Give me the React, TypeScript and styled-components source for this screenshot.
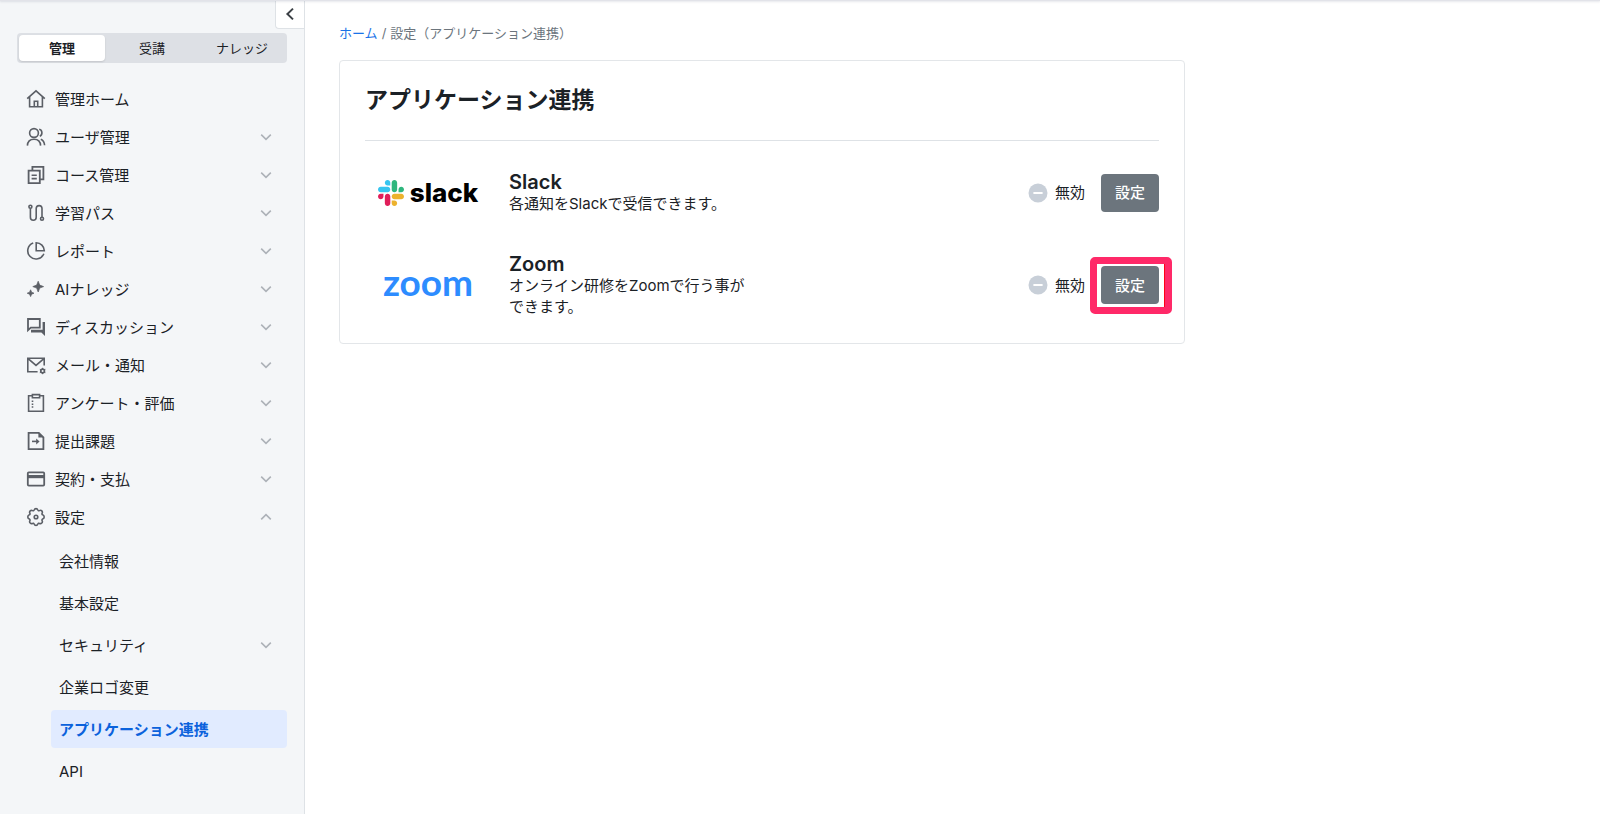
import React from "react";
import styled, { createGlobalStyle, css } from "styled-components";

const GlobalStyle = createGlobalStyle`
  *, *::before, *::after { box-sizing: border-box; }
  body {
    margin: 0;
    background: #ffffff;
    color: #1b2126;
    font-family: Inter, "Noto Sans CJK JP", sans-serif;
    font-size: 15px;
    line-height: 21px;
  }
  button { font: inherit; color: inherit; cursor: pointer; }
  ul { list-style: none; margin: 0; padding: 0; }
`;

/* ---------- page frame ---------- */

const TopEdge = styled.div`
  position: relative;
  z-index: 1;
  height: 1px;
  margin-bottom: -1px;
  background: #e2e3e9;
  box-shadow: 0 1px 2px rgba(40, 45, 80, 0.16);
`;

const Page = styled.div`
  display: flex;
  min-height: 100vh;
`;

const Sidebar = styled.aside`
  display: flex;
  flex-direction: column;
  flex: 0 0 305px;
  background: #f4f6f8;
  border-right: 1px solid #dee2e6;
`;

const CollapseButton = styled.button`
  display: flex;
  align-items: center;
  justify-content: center;
  align-self: flex-end;
  width: 29px;
  height: 29px;
  padding: 0;
  background: #ffffff;
  border: 1px solid #dee2e6;
  border-width: 0 0 1px 1px;
  border-radius: 0 0 0 4px;
`;

const ModeTabs = styled.div`
  display: flex;
  gap: 4px;
  margin: 4px 17px 0;
  padding: 2px;
  height: 30px;
  border-radius: 4px;
  background: #dde0e5;
`;

const ModeTab = styled.button<{ $active?: boolean }>`
  flex: 1 1 0;
  padding: 0;
  border: 0;
  border-radius: 4px;
  background: transparent;
  font-size: 13px;
  line-height: 26px;
  ${(p) =>
    p.$active &&
    css`
      background: #ffffff;
      font-weight: 700;
      box-shadow: 0 1px 2px rgba(0, 0, 0, 0.12);
    `}
`;

/* ---------- navigation ---------- */

const Menu = styled.ul`
  padding: 17px 17px 0;
`;

const SubMenu = styled.ul`
  display: flex;
  flex-direction: column;
  gap: 4px;
  margin-top: 6px;
  padding-left: 34px;
`;

const MenuButton = styled.button<{ $sub?: boolean; $active?: boolean }>`
  display: flex;
  align-items: center;
  gap: 9px;
  width: 100%;
  height: 38px;
  padding: 0 15px 0 ${(p) => (p.$sub ? 8 : 9)}px;
  border: 0;
  border-radius: 4px;
  text-align: left;
  background: ${(p) => (p.$active ? "#e1ebff" : "transparent")};
  ${(p) =>
    p.$active &&
    css`
      color: #0b62dc;
      font-weight: 700;
    `}
`;

const MenuLabel = styled.span`
  flex: 1;
  white-space: nowrap;
`;

const MenuIcon = styled.svg`
  flex: none;
  width: 20px;
  height: 20px;
  fill: none;
  stroke: #5b5f66;
  stroke-width: 1.6;
`;

const ArrowIcon = styled.svg<{ $up?: boolean }>`
  flex: none;
  width: 12px;
  height: 12px;
  fill: none;
  stroke: #adb2b8;
  stroke-width: 1.6;
  ${(p) => p.$up && "transform: rotate(180deg);"}
`;

/* ---------- content ---------- */

const Main = styled.main`
  flex: 1;
  min-width: 0;
  padding: 23px 34px;
`;

const Breadcrumb = styled.nav`
  display: flex;
  gap: 4px;
  font-size: 13px;
  line-height: 21px;
  color: #6c757d;
`;

const CrumbLink = styled.a`
  color: #1a73e8;
  text-decoration: none;
`;

const Card = styled.section`
  max-width: 846px;
  margin-top: 16px;
  padding: 0 25px 26px;
  border: 1px solid #e3e6e9;
  border-radius: 4px;
`;

const CardTitle = styled.h1`
  margin: 0 0 30px;
  padding: 23px 0 24px;
  border-bottom: 1px solid #dee2e6;
  font-size: 23px;
  line-height: 32px;
  font-weight: 700;
`;

const AppList = styled.ul`
  display: flex;
  flex-direction: column;
  gap: 39px;
`;

const AppRow = styled.li`
  display: flex;
  align-items: center;
`;

const LogoCell = styled.div`
  display: flex;
  align-items: center;
  justify-content: center;
  flex: 0 0 126px;
  height: 40px;
  margin-right: 18px;
`;

const SlackWord = styled.span`
  margin-left: 6px;
  font-size: 26px;
  line-height: 26px;
  font-weight: 800;
  color: #000000;
`;

const ZoomWord = styled.span`
  padding-bottom: 6px;
  font-family: Lato, sans-serif;
  font-size: 37px;
  line-height: 40px;
  font-weight: 700;
  color: #2d8cff;
`;

const AppInfo = styled.div`
  flex: 0 1 242px;
  margin-right: auto;
`;

const AppName = styled.h2`
  margin: 0;
  font-size: 20px;
  line-height: 22px;
  font-weight: 600;
`;

const AppText = styled.p`
  margin: 0;
`;

const Status = styled.span`
  display: flex;
  align-items: center;
  gap: 7px;
  margin-right: 16px;
  white-space: nowrap;
`;

const ButtonHolder = styled.div<{ $marked?: boolean }>`
  position: relative;
  flex: none;
  ${(p) =>
    p.$marked &&
    css`
      &::after {
        content: "";
        position: absolute;
        inset: -9px -13px -10px -11px;
        border: 7px solid #ff2968;
        border-radius: 5px;
        box-shadow: inset -1px 0 #ff0018;
        pointer-events: none;
      }
    `}
`;

const SettingButton = styled.button`
  display: block;
  width: 58px;
  height: 38px;
  padding: 0;
  border: 0;
  border-radius: 4px;
  background: #6c757d;
  color: #ffffff;
  font-weight: 500;
`;

/* ---------- icons ---------- */

const icons: Record<string, React.ReactNode> = {
  home: <path d="M1.2 9.6 10 1.8l8.8 7.8M3.6 8v9.7h12.8V8M8.3 17.5v-5.3h3.4v5.3" />,
  users: (
    <>
      <circle cx="8" cy="6" r="4.4" />
      <path d="M1.4 18.6c.2-4 2.8-6.4 6.6-6.4s6.4 2.4 6.6 6.4M13.2 2.2c3.4.8 3.6 5.6.6 7M14.8 12.2c2.4 1 3.6 3 3.8 6" />
    </>
  ),
  course: (
    <>
      <path d="M6.4 5V1.8h11v12.6h-3.2M2.6 5.6h11.2v12.6H2.6z" strokeWidth="1.8" />
      <path d="M5.6 10.2h5.2M5.6 13.6h5.2" />
    </>
  ),
  path: (
    <>
      <circle cx="4.4" cy="3.8" r="1.5" />
      <circle cx="16" cy="15.8" r="1.5" />
      <path d="M4.4 5.4v8.8c0 4 5.8 4 5.8 0V5.6c0-4 5.8-4 5.8 0v8.6" />
    </>
  ),
  report: (
    <>
      <path d="M7.2 1.9a8.3 8.3 0 1 0 10.6 10.8" />
      <path d="M10.2 1.7v8.1h8.1a8.1 8.1 0 0 0-8.1-8.1z" />
    </>
  ),
  spark: (
    <path
      d="M12.2 2.2l1.5 3.9 3.9 1.5-3.9 1.5-1.5 3.9-1.5-3.9-3.9-1.5 3.9-1.5zM4.6 10.8l1 2.4 2.4 1-2.4 1-1 2.4-1-2.4-2.4-1 2.4-1z"
      fill="#5b5f66"
      strokeWidth="0.7"
    />
  ),
  forum: (
    <>
      <path d="M2 2h11.8v8.6H4.8L2 13.2z" strokeWidth="1.8" />
      <path d="M16.6 5H19v14l-3.6-3.4H5v-2.8h11.6z" fill="#5b5f66" stroke="none" />
    </>
  ),
  mail: (
    <>
      <path d="M11.6 16.8H1.8V3.2h16.4v7.4M2.4 3.8l7.6 6.6 7.6-6.6" />
      <circle cx="16.6" cy="16" r="1.9" />
      <path d="M16.6 12.8v6.4M13.8 14.4l5.6 3.2M13.8 17.6l5.6-3.2" strokeWidth="1" />
      <circle cx="16.6" cy="16" r="1" fill="#f4f6f8" stroke="none" />
    </>
  ),
  clipboard: (
    <>
      <path d="M6.2 2.8H2.6v15.4h14.8V2.8h-3.6M6.4 1.6h7.2v3.2H6.4z" />
      <path d="M6.5 7.6v1.5M6.5 10.4v1.5M6.5 13.2v1.5" />
    </>
  ),
  submit: (
    <>
      <path d="M2.6 1.9h10.2l4.6 4.4v11.8H2.6z" strokeWidth="1.8" />
      <path d="M12.4 1.6v4.8h5z" fill="#5b5f66" stroke="none" />
      <path d="M6 10.4h6" />
      <path d="M10.2 7.4l3.4 3-3.4 3z" fill="#5b5f66" stroke="none" />
    </>
  ),
  card: (
    <>
      <rect x="1.8" y="3.4" width="16.4" height="13.2" rx="1" strokeWidth="1.8" />
      <path d="M2 7.6h16" strokeWidth="3.2" />
    </>
  ),
  gear: (
    <>
      <path d="M10 1.6c1.2 0 1.5.4 1.9 1.4.3.7.9.9 1.5.6 1-.5 1.6-.6 2.4.3s.8 1.5.3 2.4c-.3.6-.1 1.2.6 1.5 1 .4 1.5.9 1.5 2.2s-.5 1.7-1.5 2.1c-.7.3-.9.9-.6 1.5.5 1 .5 1.6-.3 2.4s-1.5.8-2.4.4c-.6-.3-1.2-.1-1.5.6-.4 1-.7 1.4-1.9 1.4s-1.5-.4-1.9-1.4c-.3-.7-.9-.9-1.5-.6-1 .4-1.6.4-2.4-.4s-.8-1.4-.3-2.4c.3-.6.1-1.2-.6-1.5-1-.4-1.5-.8-1.5-2.1s.5-1.8 1.5-2.2c.7-.3.9-.9.6-1.5-.5-.9-.5-1.6.3-2.4s1.4-.8 2.4-.3c.6.3 1.2.1 1.5-.6.4-1 .7-1.4 1.9-1.4z" />
      <circle cx="10" cy="10" r="1.8" />
    </>
  ),
};

const Arrow = ({ up }: { up?: boolean }) => (
  <ArrowIcon $up={up} viewBox="0 0 12 12" aria-hidden="true">
    <path d="M1.2 3.6 6 8.4l4.8-4.8" />
  </ArrowIcon>
);

const SlackMark = () => (
  <svg width="26" height="26" viewBox="0 0 122.8 122.8" aria-hidden="true">
    <path fill="#E01E5A" d="M25.8 77.6c0 7.1-5.8 12.9-12.9 12.9S0 84.7 0 77.6s5.8-12.9 12.9-12.9h12.9v12.9zm6.5 0c0-7.1 5.8-12.9 12.9-12.9s12.9 5.8 12.9 12.9v32.3c0 7.1-5.8 12.9-12.9 12.9s-12.9-5.8-12.9-12.9V77.6z" />
    <path fill="#36C5F0" d="M45.2 25.8c-7.1 0-12.9-5.8-12.9-12.9S38.1 0 45.2 0s12.9 5.8 12.9 12.9v12.9H45.2zm0 6.5c7.1 0 12.9 5.8 12.9 12.9s-5.8 12.9-12.9 12.9H12.9C5.8 58.1 0 52.3 0 45.2s5.8-12.9 12.9-12.9h32.3z" />
    <path fill="#2EB67D" d="M97 45.2c0-7.1 5.8-12.9 12.9-12.9s12.9 5.8 12.9 12.9-5.8 12.9-12.9 12.9H97V45.2zm-6.5 0c0 7.1-5.8 12.9-12.9 12.9s-12.9-5.8-12.9-12.9V12.9C64.7 5.8 70.5 0 77.6 0s12.9 5.8 12.9 12.9v32.3z" />
    <path fill="#ECB22E" d="M77.6 97c7.1 0 12.9 5.8 12.9 12.9s-5.8 12.9-12.9 12.9-12.9-5.8-12.9-12.9V97h12.9zm0-6.5c-7.1 0-12.9-5.8-12.9-12.9s5.8-12.9 12.9-12.9h32.3c7.1 0 12.9 5.8 12.9 12.9s-5.8 12.9-12.9 12.9H77.6z" />
  </svg>
);

const DisabledIcon = () => (
  <svg width="20" height="20" viewBox="0 0 20 20" aria-hidden="true">
    <circle cx="10" cy="10" r="9.5" fill="#c8cfd8" />
    <path d="M5.4 10h9.2" stroke="#ffffff" strokeWidth="2" />
  </svg>
);

/* ---------- data ---------- */

const menuItems = [
  { icon: "home", label: "管理ホーム", leaf: true },
  { icon: "users", label: "ユーザ管理" },
  { icon: "course", label: "コース管理" },
  { icon: "path", label: "学習パス" },
  { icon: "report", label: "レポート" },
  { icon: "spark", label: "AIナレッジ" },
  { icon: "forum", label: "ディスカッション" },
  { icon: "mail", label: "メール・通知" },
  { icon: "clipboard", label: "アンケート・評価" },
  { icon: "submit", label: "提出課題" },
  { icon: "card", label: "契約・支払" },
  { icon: "gear", label: "設定", open: true },
];

const settingItems = [
  { label: "会社情報" },
  { label: "基本設定" },
  { label: "セキュリティ", group: true },
  { label: "企業ロゴ変更" },
  { label: "アプリケーション連携", active: true },
  { label: "API" },
];

const apps = [
  {
    name: "Slack",
    text: "各通知をSlackで受信できます。",
    logo: (
      <>
        <SlackMark />
        <SlackWord>slack</SlackWord>
      </>
    ),
  },
  {
    name: "Zoom",
    text: "オンライン研修をZoomで行う事ができます。",
    logo: <ZoomWord>zoom</ZoomWord>,
    marked: true,
  },
];

export default function App() {
  return (
    <>
      <GlobalStyle />
      <TopEdge />
      <Page>
        <Sidebar>
          <CollapseButton aria-label="メニューを閉じる">
            <svg width="14" height="14" viewBox="0 0 14 14" fill="none" stroke="#3c4146" strokeWidth="2">
              <path d="M10 1.6 4.4 7l5.6 5.4" />
            </svg>
          </CollapseButton>
          <ModeTabs>
            <ModeTab $active>管理</ModeTab>
            <ModeTab>受講</ModeTab>
            <ModeTab>ナレッジ</ModeTab>
          </ModeTabs>
          <nav>
            <Menu>
              {menuItems.map((item) => (
                <li key={item.label}>
                  <MenuButton aria-expanded={item.leaf ? undefined : !!item.open}>
                    <MenuIcon viewBox="0 0 20 20" aria-hidden="true">
                      {icons[item.icon]}
                    </MenuIcon>
                    <MenuLabel>{item.label}</MenuLabel>
                    {!item.leaf && <Arrow up={item.open} />}
                  </MenuButton>
                  {item.open && (
                    <SubMenu>
                      {settingItems.map((sub) => (
                        <li key={sub.label}>
                          <MenuButton $sub $active={sub.active}>
                            <MenuLabel>{sub.label}</MenuLabel>
                            {sub.group && <Arrow />}
                          </MenuButton>
                        </li>
                      ))}
                    </SubMenu>
                  )}
                </li>
              ))}
            </Menu>
          </nav>
        </Sidebar>
        <Main>
          <Breadcrumb>
            <CrumbLink href="#">ホーム</CrumbLink>
            <span>/</span>
            <span>設定（アプリケーション連携）</span>
          </Breadcrumb>
          <Card>
            <CardTitle>アプリケーション連携</CardTitle>
            <AppList>
              {apps.map((app) => (
                <AppRow key={app.name}>
                  <LogoCell>{app.logo}</LogoCell>
                  <AppInfo>
                    <AppName>{app.name}</AppName>
                    <AppText>{app.text}</AppText>
                  </AppInfo>
                  <Status>
                    <DisabledIcon />
                    無効
                  </Status>
                  <ButtonHolder $marked={app.marked}>
                    <SettingButton>設定</SettingButton>
                  </ButtonHolder>
                </AppRow>
              ))}
            </AppList>
          </Card>
        </Main>
      </Page>
    </>
  );
}
